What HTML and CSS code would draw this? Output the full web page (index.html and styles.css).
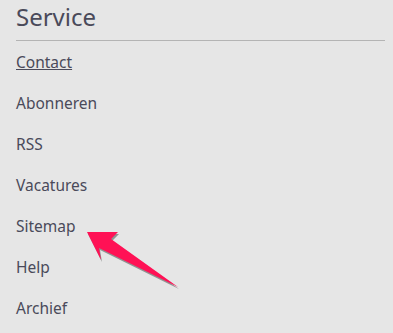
FILE: index.html
```html
<!DOCTYPE html>
<html lang="nl">
<head>
    <meta charset="UTF-8">
    <meta name="viewport" content="width=device-width, initial-scale=1.0">
    <title>Service</title>
    <link rel="stylesheet" href="styles.css">
</head>
<body>
    <div class="service">
        <h2>Service</h2>
        <ul class="links">
            <li><a href="#" class="active">Contact</a></li>
            <li><a href="#">Abonneren</a></li>
            <li><a href="#">RSS</a></li>
            <li><a href="#">Vacatures</a></li>
            <li><a href="#">Sitemap</a></li>
            <li><a href="#">Help</a></li>
            <li><a href="#">Archief</a></li>
        </ul>

        <!-- pijl naar sitemap -->
        <svg class="arrow" width="393" height="333" viewBox="0 0 393 333">
            <polygon points="88,234 119,234 112,241 179,289 100,250 102,262" fill="#6b6f6e" opacity="0.7"/>
            <polygon points="87,232 118,232 111,239 178,287 99,248 101,260" fill="#ff1155"/>
        </svg>
    </div>
</body>
</html>
```

FILE: styles.css
```css
* {
    margin: 0;
    padding: 0;
    box-sizing: border-box;
}

body {
    font-family: 'Noto Sans', sans-serif;
    background: #e6e6e6;
    color: #4a4a5a;
}

.service {
    position: relative;
    padding: 0 8px 0 16px;
}

h2 {
    font-size: 24px;
    font-weight: normal;
    line-height: 34px;
    height: 41px;
    border-bottom: 1px solid #b4b4b4;
}

.links {
    list-style: none;
    padding-top: 1px;
}

.links li {
    line-height: 41px;
    font-size: 15.5px;
}

.links a {
    color: #4a4a5a;
    text-decoration: none;
}

.links a.active {
    text-decoration: underline;
}

.arrow {
    position: absolute;
    top: 0;
    left: 0;
    pointer-events: none;
}
```
